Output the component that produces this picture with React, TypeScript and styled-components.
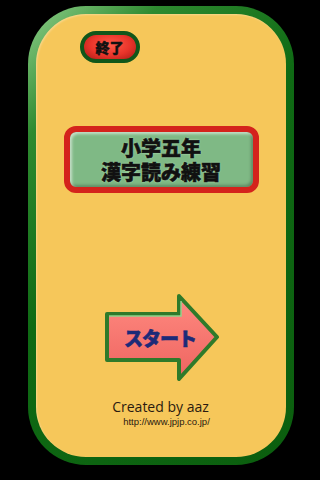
import { FC } from "react";
import styled, { createGlobalStyle } from "styled-components";

const GlobalStyle = createGlobalStyle`
  html, body {
    margin: 0;
    padding: 0;
    background: #000;
  }
  body {
    width: 320px;
    height: 480px;
    overflow: hidden;
    font-family: "Noto Sans CJK JP", "Noto Sans", sans-serif;
  }
`;

const Screen = styled.div`
  width: 320px;
  height: 480px;
  background: #000;
  display: flex;
  justify-content: center;
  padding-top: 6px;
  box-sizing: border-box;
`;

const Panel = styled.div`
  width: 266px;
  height: 459px;
  box-sizing: border-box;
  margin-left: 1px;
  border-radius: 58px;
  background: linear-gradient(135deg, #8fcf8a 0%, #2e8a30 18%, #0f6a14 45%, #0b5e0e 100%);
  padding: 8px;
  display: flex;
`;

const Inner = styled.div`
  flex: 1;
  border-radius: 50px;
  background: #f6c75a;
  display: flex;
  flex-direction: column;
  align-items: center;
  padding-top: 17px;
  box-shadow: inset 1px 1px 2px rgba(255, 255, 255, 0.3);
`;

const ExitRow = styled.div`
  align-self: stretch;
  display: flex;
  padding-left: 44px;
`;

const ExitButton = styled.button`
  width: 60px;
  height: 32px;
  box-sizing: border-box;
  border: 4px solid #10561a;
  border-radius: 16px;
  background: radial-gradient(ellipse at 50% 40%, #ff5a48 0%, #e8342a 55%, #a81a16 100%);
  color: #111;
  font-family: "Noto Sans CJK JP", sans-serif;
  font-weight: 900;
  font-size: 14px;
  -webkit-text-stroke: 0.4px #111;
  line-height: 1;
  padding: 0;
  display: flex;
  align-items: center;
  justify-content: center;
  cursor: pointer;
`;

const TitleBox = styled.div`
  margin-top: 63px;
  width: 195px;
  height: 67px;
  box-sizing: border-box;
  border: 6px solid #d4231c;
  border-radius: 12px;
  background: #7fb985;
  box-shadow: inset 2px 2px 3px rgba(255, 255, 255, 0.55), inset -2px -2px 3px rgba(0, 0, 0, 0.25);
  display: flex;
  align-items: center;
  justify-content: center;
  margin-left: 1px;
`;

const TitleText = styled.div`
  font-family: "Noto Sans CJK JP", sans-serif;
  font-weight: 900;
  font-size: 20px;
  line-height: 24px;
  text-align: center;
  color: #111;
  -webkit-text-stroke: 0.6px #111;
  text-shadow: 0 0 2px rgba(220, 255, 220, 0.8);
`;

const ArrowWrap = styled.div`
  position: relative;
  margin-top: 101px;
  margin-left: 3px;
  width: 116px;
  height: 87px;
`;

const ArrowLabel = styled.span`
  position: absolute;
  left: 0;
  top: 0;
  width: 96px;
  height: 87px;
  display: flex;
  align-items: center;
  justify-content: center;
  padding-left: 16px;
  box-sizing: border-box;
  font-family: "Noto Sans CJK JP", sans-serif;
  font-weight: 900;
  font-size: 19px;
  color: #1c2a78;
  -webkit-text-stroke: 0.6px #1c2a78;
  letter-spacing: -1px;
`;

const Credit = styled.div`
  margin-top: 17px;
  font-family: "Open Sans", "Liberation Sans", sans-serif;
  font-size: 14px;
  line-height: 18px;
  color: #2a1a10;
`;

const Url = styled.div`
  margin-left: 12px;
  font-family: "Liberation Sans", sans-serif;
  font-size: 9.5px;
  line-height: 12px;
  color: #2a1a10;
`;

const Arrow: FC = () => (
  <svg width="116" height="87" viewBox="0 0 116 87">
    <defs>
      <linearGradient id="af" x1="0" y1="0" x2="0" y2="1">
        <stop offset="0" stopColor="#ff8a80" />
        <stop offset="1" stopColor="#ee6460" />
      </linearGradient>
    </defs>
    <path
      d="M3 20 L75 20 L75 2 L113 43 L75 85 L75 66 L3 66 Z"
      fill="url(#af)"
      stroke="#2f7a2a"
      strokeWidth="4"
      strokeLinejoin="round"
    />
    <path
      d="M5 22 L77 22 L77 7"
      fill="none"
      stroke="#8fd48a"
      strokeWidth="1.5"
    />
  </svg>
);

const App: FC = () => {
  return (
    <>
      <GlobalStyle />
      <Screen>
        <Panel>
          <Inner>
            <ExitRow>
              <ExitButton>終了</ExitButton>
            </ExitRow>
            <TitleBox>
              <TitleText>
                小学五年
                <br />
                漢字読み練習
              </TitleText>
            </TitleBox>
            <ArrowWrap>
              <Arrow />
              <ArrowLabel>スタート</ArrowLabel>
            </ArrowWrap>
            <Credit>Created by aaz</Credit>
            <Url>http://www.jpjp.co.jp/</Url>
          </Inner>
        </Panel>
      </Screen>
    </>
  );
};

export default App;
